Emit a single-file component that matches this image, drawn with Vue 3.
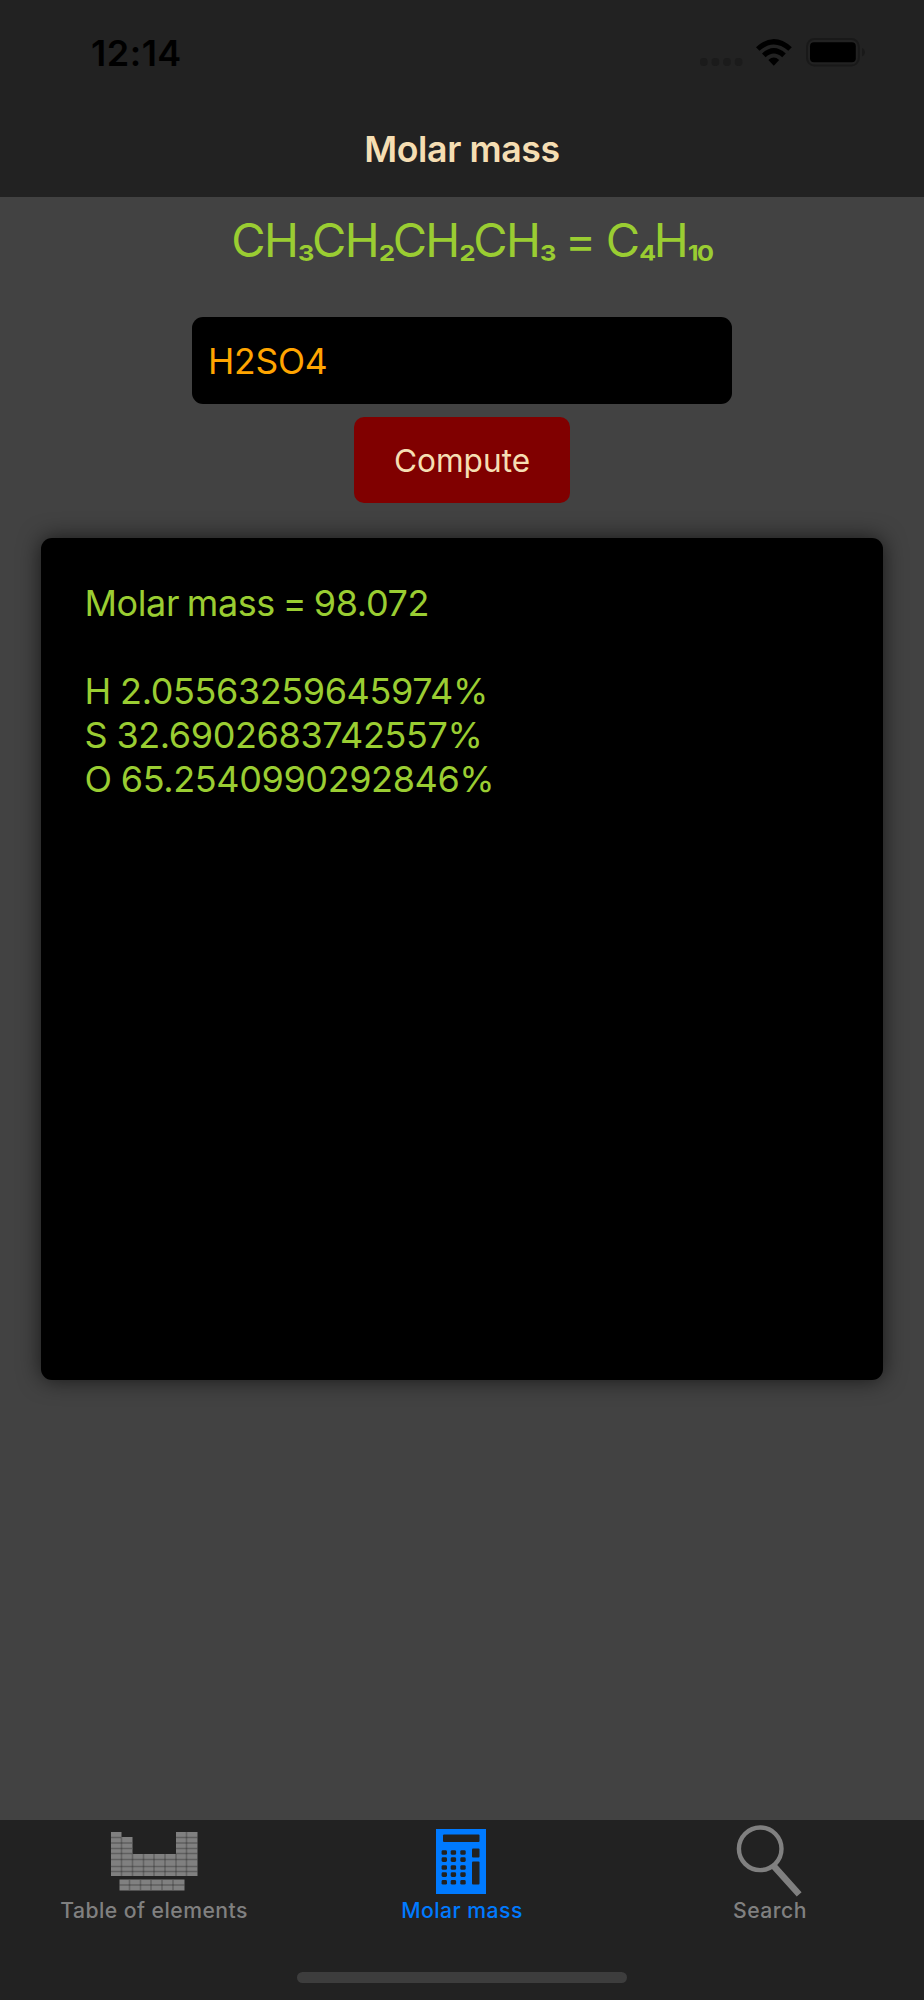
<template>
  <div class="app">
    <header class="header">
      <div class="status-bar">
        <span class="time">12:14</span>
        <svg class="status-icons" width="170" height="32" viewBox="0 0 170 32">
          <g fill="#1b1b1b">
            <rect v-for="n in 4" :key="n" :x="(n - 1) * 11.6" y="21" width="7.6" height="8" rx="3.4" />
          </g>
          <!-- wifi -->
          <path d="M56 10.2Q73.8-6.2 91.8 10.2L88.3 13.8Q73.8 1 59.5 13.8Z" />
          <path d="M62 16.6Q73.8 5.6 85.8 16.6L82.2 20.3Q73.8 12.8 65.6 20.3Z" />
          <path d="M68.4 23Q73.8 18.2 79.2 23L73.8 28.7Z" />
          <!-- battery -->
          <rect x="107" y="2" width="51.8" height="26.6" rx="7.5" fill="none" stroke="#191919" stroke-width="2" />
          <rect x="110" y="5.2" width="45.8" height="20" rx="4" />
          <path d="M162 11Q165 12.5 165 15.2T162 19.4Z" fill="#191919" />
        </svg>
      </div>
      <h1 class="title">Molar mass</h1>
    </header>

    <main class="content">
      <p class="hint">CH<i>₃</i>CH<i>₂</i>CH<i>₂</i>CH<i>₃</i> = C<i>₄</i>H<i>₁₀</i></p>
      <input v-model="formula" class="formula" type="text" @keyup.enter="compute">
      <button class="compute-btn" @click="compute">Compute</button>
      <section class="result">
        <p class="mass">Molar mass = {{ mass }}</p>
        <p v-for="item in parts" :key="item.symbol">{{ item.symbol }} {{ item.percent }}%</p>
      </section>
    </main>

    <nav class="tab-bar">
      <a class="tab">
        <svg width="100" height="77" viewBox="0 0 100 77">
          <path fill="#808080" d="M7 12H17.5V17H28.5V34H72V12H93.5V56H7ZM15.5 59.5H80.5V70.5H15.5Z" />
          <path
            fill="none"
            stroke="#222"
            stroke-opacity=".3"
            stroke-width="1.6"
            d="M17.5 17V56M28.5 34V56M39.5 34V56M50 34V56M61 34V56M72 34V56M82.5 12V56M25.5 60V70M36.5 60V70M47 60V70M58 60V70M69 60V70"
          />
          <path
            fill="none"
            stroke="#222"
            stroke-opacity=".35"
            stroke-width="1.4"
            d="M7 17.5H17M72 17.5H93.5M7 23H28M72 23H93.5M7 28.5H28M72 28.5H93.5M7 33.5H28M72 33.5H93.5M7 39.5H93.5M7 46.5H93.5M7 51.5H93.5M15.5 65H80.5"
          />
        </svg>
        <span>Table of elements</span>
      </a>
      <a class="tab active">
        <svg width="100" height="77" viewBox="0 0 100 77">
          <rect x="24" y="9" width="50" height="65" fill="#007aff" />
          <g fill="#222">
            <rect x="31" y="14.5" width="36.5" height="7.5" rx="1" />
            <rect x="60" y="28.5" width="7.5" height="9" rx="1" />
            <rect x="60" y="41.5" width="7.5" height="23" rx="1" />
            <template v-for="y in keyRows" :key="y">
              <rect v-for="x in keyCols" :key="x" :x="x" :y="y" width="5.4" height="4.6" rx="1.4" />
            </template>
          </g>
        </svg>
        <span>Molar mass</span>
      </a>
      <a class="tab">
        <svg width="100" height="77" viewBox="0 0 100 77" fill="none" stroke="#808080">
          <circle cx="40.2" cy="28.8" r="21.3" stroke-width="4.4" />
          <path d="M55 47.5L77 72" stroke-width="6.5" stroke-linecap="square" />
        </svg>
        <span>Search</span>
      </a>
      <div class="home-indicator"></div>
    </nav>
  </div>
</template>

<script setup>
import { ref } from 'vue'

const formula = ref('H2SO4')
const mass = ref('98.072')
const parts = ref([
  { symbol: 'H', percent: '2.05563259645974' },
  { symbol: 'S', percent: '32.6902683742557' },
  { symbol: 'O', percent: '65.2540990292846' }
])

// calculator icon keys
const keyCols = [29.6, 38.7, 48.3]
const keyRows = [30.2, 37.3, 45.2, 52.3, 60]

const weights = { H: 1.008, C: 12.011, N: 14.007, O: 15.999, Na: 22.99, S: 32.06, Cl: 35.45 }

const compute = () => {
  const amounts = {}
  for (const [, symbol, count] of formula.value.matchAll(/([A-Z][a-z]?)(\d*)/g)) {
    if (!weights[symbol]) return
    amounts[symbol] = (amounts[symbol] || 0) + weights[symbol] * Number(count || 1)
  }
  const total = Object.values(amounts).reduce((a, b) => a + b, 0)
  if (!total) return
  mass.value = total.toFixed(3)
  parts.value = Object.keys(amounts).map((symbol) => ({
    symbol,
    percent: ((amounts[symbol] / total) * 100).toPrecision(15)
  }))
}
</script>

<style>
body {
  background: #424242;
}
</style>

<style scoped>
.app {
  display: flex;
  flex-direction: column;
  width: 924px;
  height: 2000px;
  background: #424242;
  font-family: Inter, "Liberation Sans", sans-serif;
}

.header {
  height: 197px;
  background: #222;
}

.status-bar {
  display: flex;
  justify-content: space-between;
  height: 127px;
  padding: 31px 54px 0 91px;
  box-sizing: border-box;
}

.time {
  font-size: 36px;
  font-weight: 600;
  letter-spacing: 0.5px;
  line-height: 44px;
}

.status-icons {
  margin-top: 6px;
}

.title {
  margin: 0;
  color: #f5deb3;
  font-size: 35.7px;
  font-weight: 600;
  letter-spacing: -0.4px;
  line-height: 44px;
  text-align: center;
}

.content {
  flex: 1;
  display: flex;
  flex-direction: column;
  align-items: center;
  padding-top: 22px;
}

.hint {
  height: 42px;
  margin: 0 0 56px 19px;
  color: #9acd32;
  font-size: 47px;
  letter-spacing: -1.6px;
  line-height: 42px;
  white-space: nowrap;
  word-spacing: -0.5px;
}

.hint i {
  position: relative;
  top: -2px;
  font-size: 39px;
  font-style: normal;
  font-weight: 500;
  letter-spacing: -3px;
  line-height: 1;
}

.formula {
  width: 540px;
  height: 87px;
  padding: 2px 16px 0;
  box-sizing: border-box;
  border: none;
  border-radius: 11px;
  outline: none;
  background: #000;
  color: #ffa500;
  font-family: inherit;
  font-size: 35.4px;
  letter-spacing: -0.2px;
}

.compute-btn {
  width: 216px;
  height: 86px;
  margin-top: 13px;
  padding: 0;
  border: none;
  border-radius: 10px;
  background: #800000;
  color: #f5deb3;
  font-family: inherit;
  font-size: 31.6px;
}

.result {
  width: 842px;
  height: 842px;
  margin-top: 35px;
  padding: 43px 43.5px;
  box-sizing: border-box;
  border-radius: 11px;
  background: #000;
  box-shadow: 0 0 22px rgba(0, 0, 0, 0.65);
  color: #9acd32;
  font-size: 36px;
  letter-spacing: -0.4px;
  line-height: 44px;
  word-spacing: -0.5px;
}

.result p {
  margin: 0;
  white-space: nowrap;
}

.result .mass {
  margin-bottom: 44px;
  word-spacing: -2px;
}

.tab-bar {
  display: grid;
  grid-template-columns: repeat(3, 308px);
  grid-template-rows: 152px 11px;
  height: 180px;
  background: #222;
}

.tab {
  display: flex;
  flex-direction: column;
  align-items: center;
  color: #808080;
  font-size: 21.2px;
  font-weight: 500;
  letter-spacing: 0.45px;
  line-height: 26.5px;
  white-space: nowrap;
}

.tab.active {
  color: #007aff;
}

.home-indicator {
  grid-column: 1 / -1;
  justify-self: center;
  width: 330px;
  height: 11px;
  border-radius: 6px;
  background: #3d3d3d;
}
</style>
